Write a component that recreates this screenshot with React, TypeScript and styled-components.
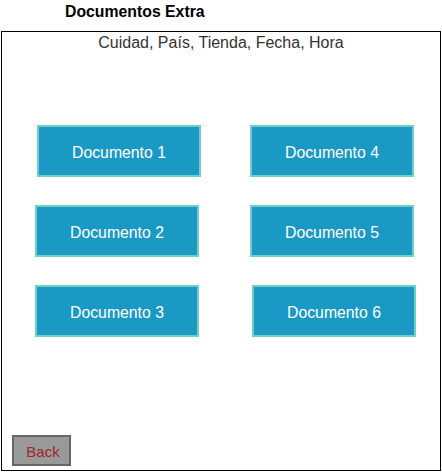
import React from "react";
import styled, { createGlobalStyle } from "styled-components";

const Global = createGlobalStyle`
  html, body { margin: 0; padding: 0; background: #ffffff; }
  body { font-family: "Liberation Sans", Arial, sans-serif; }
  * { box-sizing: border-box; }
`;

const Page = styled.div`
  width: 442px;
  height: 472px;
  display: flex;
  flex-direction: column;
`;

const Title = styled.h1`
  margin: 0;
  height: 31px;
  padding: 3px 0 0 65px;
  font-size: 15.8px;
  line-height: 18px;
  font-weight: bold;
  color: #000;
`;

const Frame = styled.section`
  margin-left: 1px;
  width: 440px;
  height: 440px;
  border: 1px solid #000;
  display: flex;
  flex-direction: column;
`;

const Subtitle = styled.p`
  margin: 2px 0 0;
  text-align: center;
  font-size: 16px;
  line-height: 18px;
  color: #333;
`;

const Grid = styled.div`
  margin-top: 73px;
  padding-left: 35px;
  display: grid;
  grid-template-columns: 164px 164px;
  column-gap: 49px;
  row-gap: 28px;
`;

const DocButton = styled.button<{ $shift?: number }>`
  width: 164px;
  height: 52px;
  margin-left: ${(p) => p.$shift ?? 0}px;
  background: #1b99c5;
  border: 2px solid #6fd0c8;
  color: #ffffff;
  font-family: "Liberation Sans", Arial, sans-serif;
  font-size: 15.8px;
  padding: 3px 0 0;
  cursor: pointer;
`;

const BackButton = styled.button`
  margin: auto 0 4px 10px;
  width: 59px;
  height: 31px;
  background: #999999;
  border: 2px solid #666666;
  color: #a3242a;
  font-family: "Liberation Sans", Arial, sans-serif;
  font-size: 15px;
  padding: 2px 0 0 3px;
  cursor: pointer;
`;

const docs: { label: string; shift: number }[] = [
  { label: "Documento 1", shift: 0 },
  { label: "Documento 4", shift: 0 },
  { label: "Documento 2", shift: -2 },
  { label: "Documento 5", shift: 0 },
  { label: "Documento 3", shift: -2 },
  { label: "Documento 6", shift: 2 },
];

export default function App() {
  return (
    <Page>
      <Global />
      <Title>Documentos Extra</Title>
      <Frame>
        <Subtitle>Cuidad, País, Tienda, Fecha, Hora</Subtitle>
        <Grid>
          {docs.map((d) => (
            <DocButton key={d.label} $shift={d.shift}>
              {d.label}
            </DocButton>
          ))}
        </Grid>
        <BackButton>Back</BackButton>
      </Frame>
    </Page>
  );
}
